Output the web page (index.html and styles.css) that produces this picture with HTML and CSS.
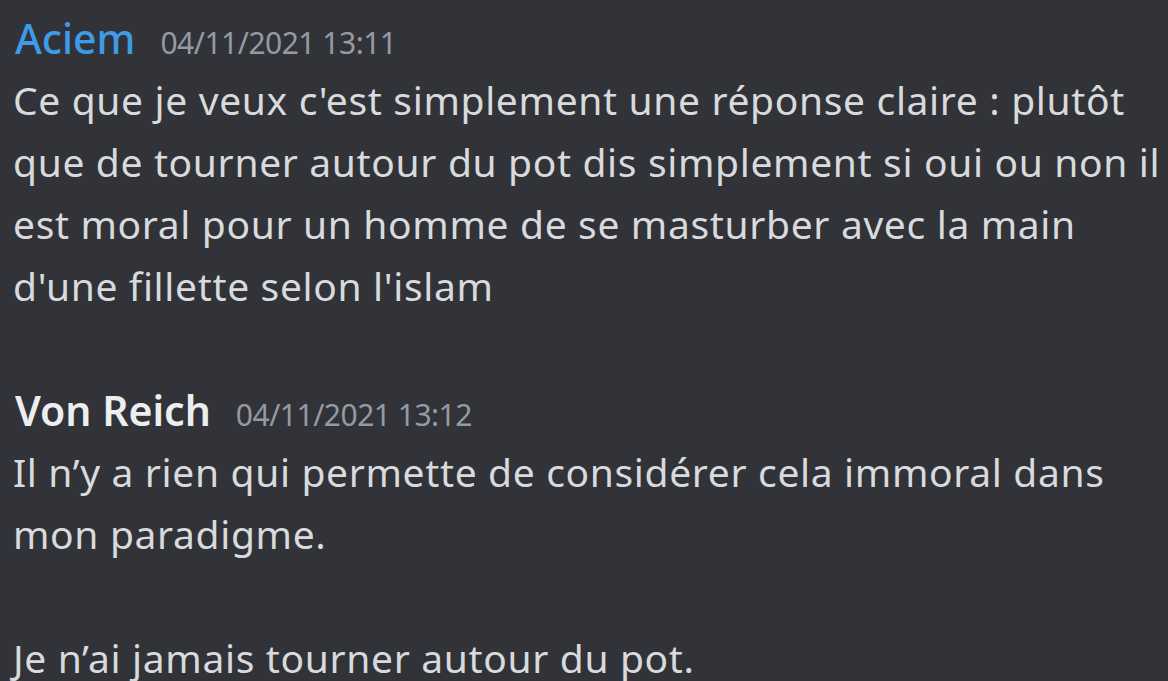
FILE: index.html
```html
<!DOCTYPE html>
<html lang="fr">
<head>
<meta charset="utf-8">
<link rel="stylesheet" href="styles.css">
</head>
<body>
<main class="chat">
  <article class="msg">
    <header class="msg-head">
      <span class="author author-blue">Aciem</span>
      <time class="stamp">04/11/2021 13:11</time>
    </header>
    <p class="line">Ce que je veux c'est simplement une réponse claire : plutôt</p>
    <p class="line">que de tourner autour du pot dis simplement si oui ou non il</p>
    <p class="line">est moral pour un homme de se masturber avec la main</p>
    <p class="line">d'une fillette selon l'islam</p>
  </article>
  <article class="msg">
    <header class="msg-head">
      <span class="author author-white">Von Reich</span>
      <time class="stamp">04/11/2021 13:12</time>
    </header>
    <p class="line">Il n’y a rien qui permette de considérer cela immoral dans</p>
    <p class="line">mon paradigme.</p>
    <p class="line blank">&nbsp;</p>
    <p class="line">Je n’ai jamais tourner autour du pot.</p>
  </article>
</main>
</body>
</html>
```

FILE: styles.css
```css
html, body {
  margin: 0;
  padding: 0;
  background: #313338;
}
body {
  width: 1168px;
  height: 681px;
  overflow: hidden;
  font-family: "Noto Sans", "Open Sans", sans-serif;
  color: #d8dadd;
}
.chat {
  padding: 7px 0 0 13px;
  display: flex;
  flex-direction: column;
  gap: 62px;
}
.msg {
  display: flex;
  flex-direction: column;
}
.msg-head {
  display: flex;
  align-items: baseline;
  gap: 25px;
  height: 62px;
  line-height: 62px;
  padding-left: 2px;
}
.author {
  font-size: 41px;
  font-weight: 500;
}
.author-blue { color: #3f9be6; }
.author-white { color: #eceef0; font-weight: 600; }
.stamp {
  font-size: 30px;
  color: #959aa2;
  letter-spacing: -0.5px;
}
.line {
  margin: 0;
  font-size: 39px;
  line-height: 62px;
  height: 62px;
  white-space: nowrap;
  letter-spacing: 0.65px;
}
```
